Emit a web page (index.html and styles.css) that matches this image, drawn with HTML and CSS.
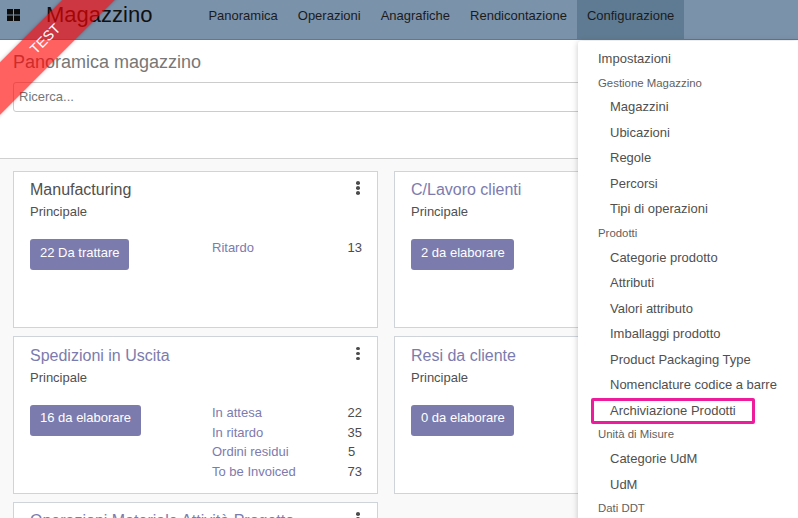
FILE: index.html
```html
<!DOCTYPE html>
<html lang="it">
<head>
<meta charset="utf-8">
<title>Magazzino</title>
<link rel="stylesheet" href="styles.css">
</head>
<body>
<div class="app">
  <header class="navbar">
    <svg class="apps" width="13" height="12" viewBox="0 0 13 12"><path d="M0 0h6v5.5H0zM7 0h6v5.5H7zM0 6.5h6V12H0zM7 6.5h6V12H7z" fill="#0b0b0b"/></svg>
    <span class="brand">Magazzino</span>
    <nav class="menu">
      <a>Panoramica</a><a>Operazioni</a><a>Anagrafiche</a><a>Rendicontazione</a><a class="active">Configurazione</a>
    </nav>
  </header>
  <section class="panel">
    <h1 class="crumb">Panoramica magazzino</h1>
    <div class="search">Ricerca...</div>
  </section>
  <main class="board">
    <article class="card">
      <div class="card-head"><h2 class="title dark">Manufacturing</h2><span class="dots"><i></i><i></i><i></i></span></div>
      <div class="sub">Principale</div>
      <div class="card-body">
        <button class="btn">22 Da trattare</button>
        <ul class="stats"><li><a>Ritardo</a><b>13</b></li></ul>
      </div>
    </article>
    <article class="card">
      <div class="card-head"><h2 class="title">C/Lavoro clienti</h2><span class="dots"><i></i><i></i><i></i></span></div>
      <div class="sub">Principale</div>
      <div class="card-body"><button class="btn">2 da elaborare</button></div>
    </article>
    <article class="card">
      <div class="card-head"><h2 class="title">Spedizioni in Uscita</h2><span class="dots"><i></i><i></i><i></i></span></div>
      <div class="sub">Principale</div>
      <div class="card-body">
        <button class="btn">16 da elaborare</button>
        <ul class="stats">
          <li><a>In attesa</a><b>22</b></li>
          <li><a>In ritardo</a><b>35</b></li>
          <li><a>Ordini residui</a><b>5</b></li>
          <li><a>To be Invoiced</a><b>73</b></li>
        </ul>
      </div>
    </article>
    <article class="card">
      <div class="card-head"><h2 class="title">Resi da cliente</h2><span class="dots"><i></i><i></i><i></i></span></div>
      <div class="sub">Principale</div>
      <div class="card-body"><button class="btn">0 da elaborare</button></div>
    </article>
    <article class="card">
      <div class="card-head"><h2 class="title">Operazioni Materiale Attività Progetto</h2><span class="dots"><i></i><i></i><i></i></span></div>
    </article>
  </main>
  <div class="dropdown">
    <a class="item">Impostazioni</a>
    <div class="head">Gestione Magazzino</div>
    <a class="item sub-item">Magazzini</a>
    <a class="item sub-item">Ubicazioni</a>
    <a class="item sub-item">Regole</a>
    <a class="item sub-item">Percorsi</a>
    <a class="item sub-item">Tipi di operazioni</a>
    <div class="head">Prodotti</div>
    <a class="item sub-item">Categorie prodotto</a>
    <a class="item sub-item">Attributi</a>
    <a class="item sub-item">Valori attributo</a>
    <a class="item sub-item">Imballaggi prodotto</a>
    <a class="item sub-item">Product Packaging Type</a>
    <a class="item sub-item">Nomenclature codice a barre</a>
    <a class="item sub-item marked">Archiviazione Prodotti</a>
    <div class="head">Unità di Misure</div>
    <a class="item sub-item">Categorie UdM</a>
    <a class="item sub-item">UdM</a>
    <div class="head">Dati DDT</div>
  </div>
  <div class="ribbon"><span>TEST</span></div>
</div>
</body>
</html>
```
FILE: styles.css
```css
* { box-sizing: border-box; }
html, body { margin: 0; height: 100%; overflow: hidden; }
body { font-family: "Liberation Sans", Arial, sans-serif; font-size: 13px; color: #4c4c4c; background: #f9f9f9; }
.app { position: relative; width: 798px; height: 518px; overflow: hidden; }
.navbar { height: 40px; background: #7b92ab; border-bottom: 1px solid #6f6f9e; display: flex; align-items: center; padding-left: 7px; color: #111; }
.apps { display: block; margin-bottom: 9px; }
.brand { font-size: 22px; margin-left: 26px; color: #111; margin-top: -9px; }
.menu { display: flex; margin-left: 46px; align-self: stretch; margin-bottom: -1px; }
.menu a { padding: 0 10px; line-height: 31px; font-size: 13px; color: #1b1b1b; }
.menu a.active { background: #5f7b93; }
.panel { height: 119px; background: #fff; border-bottom: 1px solid #d0d0d0; padding: 12px 0 0 13px; }
.crumb { margin: 0; font-size: 18px; font-weight: 400; color: #777; line-height: 21px; }
.search { margin-top: 9px; height: 30px; width: 700px; border: 1px solid #ccc; border-radius: 3px; padding: 0 5px; line-height: 27px; font-size: 13px; color: #777; }
.board { display: grid; grid-template-columns: 365px 365px; column-gap: 16px; row-gap: 8px; padding: 12px 0 0 13px; grid-auto-rows: 157.4px; }
.card { background: #fff; border: 1px solid #ced4da; padding: 7.3px 16px 0; }
.card-head { display: flex; justify-content: space-between; }
.title { margin: 0; font-size: 16px; font-weight: 400; line-height: 21px; color: #7c7bad; }
.title.dark { color: #505050; }
.dots { display: flex; flex-direction: column; gap: 1.5px; padding-top: 2px; margin-right: 1px; }
.dots i { width: 4px; height: 3.5px; border-radius: 50%; background: #4c4c4c; display: block; }
.sub { margin-top: 3px; line-height: 18px; font-size: 13px; color: #505050; }
.card-body { display: flex; margin-top: 18px; align-items: flex-start; }
.btn { border: 0; border-radius: 3px; background: #7c7bad; color: #fff; font: inherit; height: 31px; padding: 0 9.5px 5px 10px; }
.stats { list-style: none; margin: -.4px -1px 0 auto; padding: 0; width: 150px; }
.stats li { display: flex; height: 19.6px; line-height: 17px; }
.stats a { color: #7c7bad; width: 136px; }
.stats b { font-weight: 400; }
.dropdown { position: absolute; left: 578px; top: 41px; width: 220px; height: 500px; background: #fff; border-radius: 3px 0 0 0; box-shadow: 0 1px 6px rgba(0,0,0,.22); padding-top: 5px; }
.item { display: block; height: 25.5px; line-height: 25.5px; padding-left: 20px; font-size: 13px; color: #505050; }
.sub-item { padding-left: 32px; }
.head { height: 22.9px; line-height: 23.5px; padding-left: 20px; font-size: 11.4px; color: #5f5f5f; }
.marked { position: relative; }
.marked::after { content: ""; box-sizing: border-box; position: absolute; left: 13px; top: .2px; width: 164px; height: 26px; border: 3px solid #ec1c9c; border-radius: 2px; }
.ribbon { position: absolute; left: -64px; top: 19px; width: 230px; height: 37px; line-height: 30px; padding-right: 10px; transform: rotate(-45deg); text-align: center; background: rgba(255,0,0,.62); color: #fff; box-shadow: 0 0 4px rgba(0,0,0,.25); font-size: 14px; }
```
